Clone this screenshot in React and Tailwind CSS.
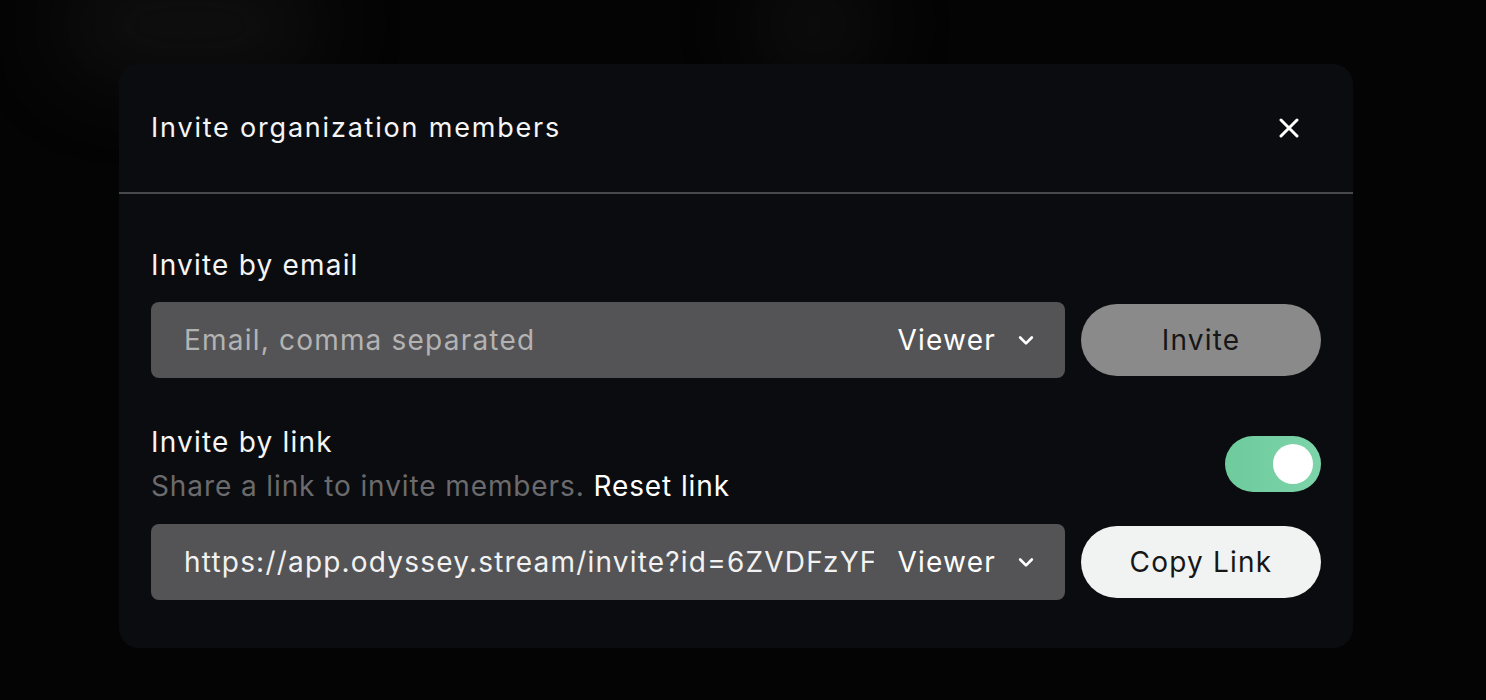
import React from "react";

function Chevron() {
  return (
    <svg width="20" height="20" viewBox="0 0 24 24" fill="none" stroke="currentColor" strokeWidth="3.2" strokeLinecap="round" strokeLinejoin="round">
      <path d="M5 9l7 7 7-7" />
    </svg>
  );
}

function CloseX() {
  return (
    <svg width="20" height="20" viewBox="0 0 20 20" fill="none" stroke="currentColor" strokeWidth="3" strokeLinecap="round">
      <path d="M2 2L18 18M18 2L2 18" />
    </svg>
  );
}

export default function App() {
  return (
    <div
      className="relative h-[700px] w-full overflow-hidden bg-[#040404] pl-[119px] pt-[64px]"
      style={{ fontFamily: "Inter, 'Noto Sans', sans-serif" }}
    >
      <div className="pointer-events-none absolute left-[60px] top-[-30px] h-[110px] w-[260px] rounded-full bg-[#141414] blur-2xl opacity-70" />
      <div className="pointer-events-none absolute left-[760px] top-[-20px] h-[90px] w-[110px] rounded-full bg-[#161616] blur-2xl opacity-70" />
      <div className="relative w-[1234px] rounded-[20px] bg-[#0b0c0f] text-[#f5f5f5] tracking-[1.2px]">
        <div className="flex h-[128px] items-center justify-between pl-8 pr-[54px]">
          <div className="text-[27px] font-normal tracking-[1.8px]">Invite organization members</div>
          <button className="text-white"><CloseX /></button>
        </div>
        <div className="h-[2px] bg-[#49494b]" />
        <div className="px-8 pb-12 pt-[49px]">
          <div className="text-[28px] leading-[44px]">Invite by email</div>
          <div className="mt-[15px] flex items-center gap-4">
            <div className="flex h-[76px] flex-1 items-center rounded-lg bg-[#545456] pl-[33px] pr-[29px] text-[28px]">
              <div className="flex-1 text-[#b3b3b3]">Email, comma separated</div>
              <div className="flex items-center gap-[20px] text-white">
                <span>Viewer</span>
                <Chevron />
              </div>
            </div>
            <button className="h-[72px] w-[240px] rounded-full bg-[#8a8a8b] text-[28px] tracking-[1.2px] text-[#161616]">Invite</button>
          </div>
          <div className="mt-[42px] flex items-center justify-between">
            <div className="text-[28px] leading-[44px]">
              <div>Invite by link</div>
              <div className="tracking-[0.9px]">
                <span className="text-[#6b6b6d]">Share a link to invite members. </span>
                <span className="text-white">Reset link</span>
              </div>
            </div>
            <div className="flex h-[56px] w-[96px] items-center justify-end rounded-full bg-gradient-to-r from-[#6dcb9c] to-[#7dd4aa] pr-[8px]">
              <div className="h-[40px] w-[40px] rounded-full bg-white" />
            </div>
          </div>
          <div className="mt-4 flex items-center gap-4">
            <div className="flex h-[76px] min-w-0 flex-1 items-center rounded-lg bg-[#545456] pl-[33px] pr-[29px] text-[28px]">
              <div className="min-w-0 flex-1 overflow-hidden whitespace-nowrap text-[#f2f2f2]">https://app.odyssey.stream/invite?id=6ZVDFzYF3kq8</div>
              <div className="ml-6 flex items-center gap-[20px] text-white">
                <span>Viewer</span>
                <Chevron />
              </div>
            </div>
            <button className="h-[72px] w-[240px] rounded-full bg-[#f1f3f2] text-[28px] tracking-[1.2px] text-[#161616]">Copy Link</button>
          </div>
        </div>
      </div>
    </div>
  );
}
